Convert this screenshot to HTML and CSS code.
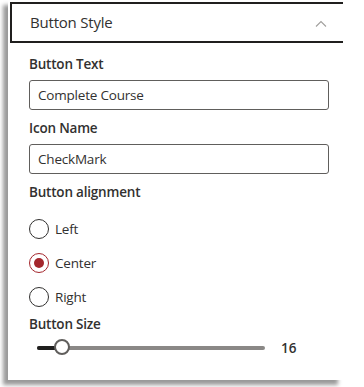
FILE: index.html
```html
<!DOCTYPE html>
<html>
<head>
<meta charset="utf-8">
<link rel="stylesheet" href="styles.css">
</head>
<body>
<div class="panel">
  <div class="header">
    <span class="title">Button Style</span>
    <svg class="chev" width="12" height="8" viewBox="0 0 12 8"><path d="M1 6.5 L6 1.5 L11 6.5" fill="none" stroke="#a19f9d" stroke-width="1.1"/></svg>
  </div>
  <div class="body">
    <div class="field">
      <div class="label">Button Text</div>
      <div class="input">Complete Course</div>
    </div>
    <div class="field">
      <div class="label">Icon Name</div>
      <div class="input">CheckMark</div>
    </div>
    <div class="field">
      <div class="label">Button alignment</div>
      <div class="radios">
        <div class="radio"><span class="circle"></span><span>Left</span></div>
        <div class="radio"><span class="circle on"></span><span>Center</span></div>
        <div class="radio"><span class="circle"></span><span>Right</span></div>
      </div>
    </div>
    <div class="field slider-field">
      <div class="label">Button Size</div>
      <div class="slider">
        <div class="track"><div class="fill"></div><div class="thumb"></div></div>
        <span class="value">16</span>
      </div>
    </div>
  </div>
</div>
</body>
</html>
```
FILE: styles.css
```css
html, body {
  margin: 0;
  padding: 0;
  background: #fff;
}
body {
  font-family: "Open Sans", "Noto Sans", sans-serif;
  color: #323130;
  width: 364px;
  height: 387px;
  overflow: hidden;
}
.panel {
  margin-left: 8px;
  width: 335px;
  height: 380px;
  background: #fff;
  box-shadow: -5px 5px 4px rgba(0,0,0,0.4);
  overflow: hidden;
}
.header {
  margin: 2px 0 0 2px;
  height: 37px;
  border: 2px solid #201f1e;
  border-right: none;
  display: flex;
  align-items: center;
  justify-content: space-between;
  padding: 0 16px 0 18px;
}
.title {
  font-size: 15px;
  letter-spacing: -0.2px;
  position: relative;
  top: -1px;
}
.chev {
  margin-top: 3px;
}
.body {
  padding: 11px 0 0 21px;
}
.field {
  width: 300px;
}
.label {
  font-size: 13.5px;
  font-weight: 600;
  line-height: 20px;
  letter-spacing: -0.2px;
}
.input {
  margin-top: 6px;
  height: 28px;
  border: 1px solid #605e5c;
  border-radius: 3px;
  font-size: 13.5px;
  letter-spacing: -0.2px;
  line-height: 28px;
  padding-left: 8px;
  box-sizing: content-box;
  margin-bottom: 8px;
}
.radios {
  display: flex;
  flex-direction: column;
  gap: 14px;
  margin-top: 17px;
}
.radio {
  display: flex;
  align-items: center;
  gap: 6px;
  font-size: 13.5px;
  letter-spacing: -0.2px;
  height: 20px;
}
.circle {
  width: 18px;
  height: 18px;
  border: 1px solid #323130;
  border-radius: 50%;
  box-sizing: content-box;
  position: relative;
  flex: none;
}
.circle.on {
  border-color: #a4262c;
}
.circle.on::after {
  content: "";
  position: absolute;
  left: 4px;
  top: 4px;
  width: 10px;
  height: 10px;
  border-radius: 50%;
  background: #a4262c;
}
.slider-field {
  margin-top: 7px;
}
.slider {
  display: flex;
  align-items: center;
  margin-top: 4px;
  padding-left: 8px;
  height: 20px;
}
.track {
  width: 228px;
  height: 4px;
  background: #8a8886;
  border-radius: 2px;
  position: relative;
}
.fill {
  width: 25px;
  height: 4px;
  background: #201f1e;
  border-radius: 2px;
}
.thumb {
  position: absolute;
  left: 17px;
  top: -7px;
  width: 12px;
  height: 12px;
  border: 2px solid #605e5c;
  border-radius: 50%;
  background: #fff;
}
.value {
  margin-left: 16px;
  font-size: 13.5px;
  font-weight: 600;
}
```
